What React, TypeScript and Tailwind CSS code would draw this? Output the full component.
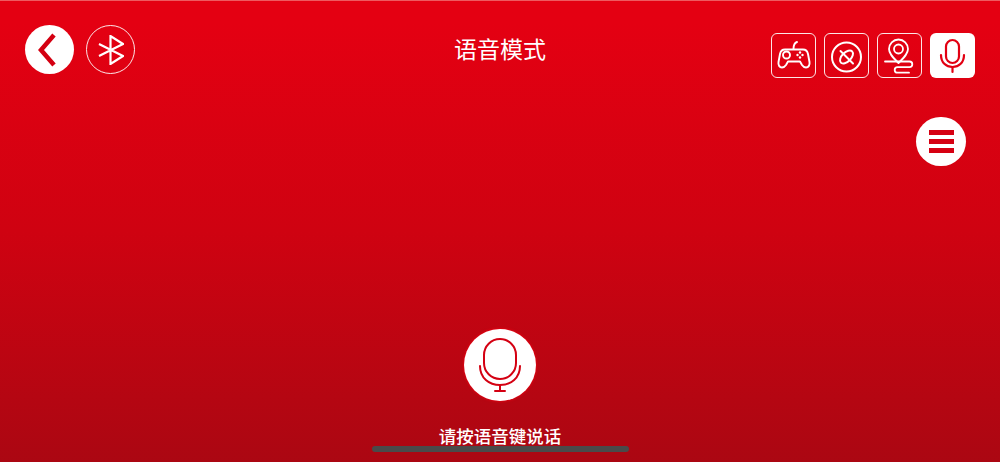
const FONT = "font-['Liberation_Sans','Noto_Sans_CJK_SC',sans-serif]"

function Gamepad() {
  return (
    <svg width="45" height="45" viewBox="0 0 45 45" fill="none" stroke="currentColor" strokeWidth="1.900" strokeLinecap="round" strokeLinejoin="round" className="shrink-0">
      <path d="M22.500 16c0-3.500 .8-6 3.500-7" />
      <path d="M14 16.500H32C35 16.500 36.500 18.500 37 21L38.500 29C39 32 37.500 34.500 35 34.500C33 34.500 32 33.500 31 32L29 28.500H17L15 32C14 33.500 13 34.500 11 34.500C8.500 34.500 7 32 7.500 29L9 21C9.500 18.500 11 16.500 14 16.500Z" />
      <circle cx="15.500" cy="22" r="3.500" />
      <circle cx="29" cy="19.500" r="1.200" fill="currentColor" stroke="none" />
      <circle cx="29" cy="24.500" r="1.200" fill="currentColor" stroke="none" />
      <circle cx="26.500" cy="22" r="1.200" fill="currentColor" stroke="none" />
      <circle cx="31.500" cy="22" r="1.200" fill="currentColor" stroke="none" />
    </svg>
  )
}

function Steering() {
  return (
    <svg width="45" height="45" viewBox="0 0 45 45" fill="none" stroke="currentColor" strokeWidth="2" strokeLinecap="round" className="shrink-0">
      <circle cx="22.500" cy="24" r="14.500" />
      <ellipse cx="22.500" cy="24" rx="4.500" ry="8" transform="rotate(45 22.500 24)" />
      <path d="M16.500 18L29 30.500" />
    </svg>
  )
}

function RoutePin() {
  return (
    <svg width="45" height="45" viewBox="0 0 45 45" fill="none" stroke="currentColor" strokeWidth="1.800" strokeLinecap="round" strokeLinejoin="round" className="shrink-0">
      <path d="M21.500 30c-5-5-9.500-9-9.500-14a9.500 9.500 0 0 1 19 0c0 5-4.500 9-9.500 14z" />
      <circle cx="21.500" cy="16" r="4.500" />
      <path d="M8 28.500H32.500a2.800 2.800 0 0 1 0 5.600H20.500a2.800 2.800 0 0 0 0 5.600H32" />
    </svg>
  )
}

function SmallMic() {
  return (
    <svg width="45" height="45" viewBox="0 0 45 45" fill="none" stroke="currentColor" strokeWidth="2.200" strokeLinecap="round" className="shrink-0">
      <rect x="16" y="7" width="13" height="23" rx="6.500" />
      <path d="M11 22c0 7.500 5 12 11.500 12S34 29.500 34 22" />
      <path d="M22.500 34v5" />
    </svg>
  )
}

function BigMic() {
  return (
    <svg width="72" height="72" viewBox="0 0 72 72" fill="none" stroke="currentColor" strokeWidth="2" strokeLinecap="round" strokeLinejoin="round">
      <rect x="20" y="10" width="32" height="40" rx="16" />
      <path d="M16 37c0 12 9 19 20 19s20-7 20-19" />
      <path d="M36 56v6M31 62h10" />
    </svg>
  )
}

function ModeButton({ active, children }: { active?: boolean; children: React.ReactNode }) {
  return (
    <div
      className={
        active
          ? 'flex h-[45px] w-[45px] items-center justify-center rounded-[6px] bg-white text-[#e20012]'
          : 'flex h-[45px] w-[45px] items-center justify-center rounded-[6px] border-[1.5px] border-white/90 text-white'
      }
    >
      {children}
    </div>
  )
}

export default function App() {
  return (
    <div className={`${FONT} relative flex h-[462px] w-[1000px] flex-col overflow-hidden bg-gradient-to-b from-[#e40012] from-5% via-[#cf0211] via-50% to-[#ab0712] text-white`}>
      <div className="absolute inset-x-0 top-0 h-px bg-[#ee5a60]" />
      <div className="flex items-start justify-between px-[25px] pt-[25px]">
        <div className="flex w-[204px] gap-[12px]">
          <div className="flex h-[49px] w-[49px] items-center justify-center rounded-full bg-white pr-[6px] text-[#d40012]">
            <svg width="20" height="34" viewBox="0 0 20 34" fill="none" stroke="currentColor" strokeWidth="4.500">
              <path d="M17 2L4 17l13 15" />
            </svg>
          </div>
          <div className="flex h-[49px] w-[49px] items-center justify-center rounded-full border-[1.5px] border-white/90">
            <svg width="26" height="30" viewBox="0 0 26 30" fill="none" stroke="currentColor" strokeWidth="2.200">
              <path d="M1 9L25 21 12.500 29V1L25 9 1 21" />
            </svg>
          </div>
        </div>
        <div className="pt-[9px] text-[23px] leading-[32px]">语音模式</div>
        <div className="flex w-[204px] justify-end gap-[8px] pt-[8px]">
          <ModeButton><Gamepad /></ModeButton>
          <ModeButton><Steering /></ModeButton>
          <ModeButton><RoutePin /></ModeButton>
          <ModeButton active><SmallMic /></ModeButton>
        </div>
      </div>
      <div className="mt-[39px] flex justify-end pr-[34px]">
        <div className="flex h-[49px] w-[50px] flex-col items-center justify-center gap-[4px] rounded-full bg-white">
          <div className="h-[5px] w-[25px] bg-[#d60012]" />
          <div className="h-[5px] w-[25px] bg-[#d60012]" />
          <div className="h-[5px] w-[25px] bg-[#d60012]" />
        </div>
      </div>
      <div className="mt-[163px] flex flex-col items-center">
        <div className="flex h-[72px] w-[72px] items-center justify-center rounded-full bg-white text-[#d40012] shadow-[0_0_3px_#ff0012]">
          <BigMic />
        </div>
        <div className="mt-[25px] text-[17.500px] font-medium leading-[22px]">请按语音键说话</div>
      </div>
      <div className="absolute bottom-[10px] left-[372px] h-[6px] w-[257px] rounded-full bg-[#4a4a4a]" />
    </div>
  )
}
